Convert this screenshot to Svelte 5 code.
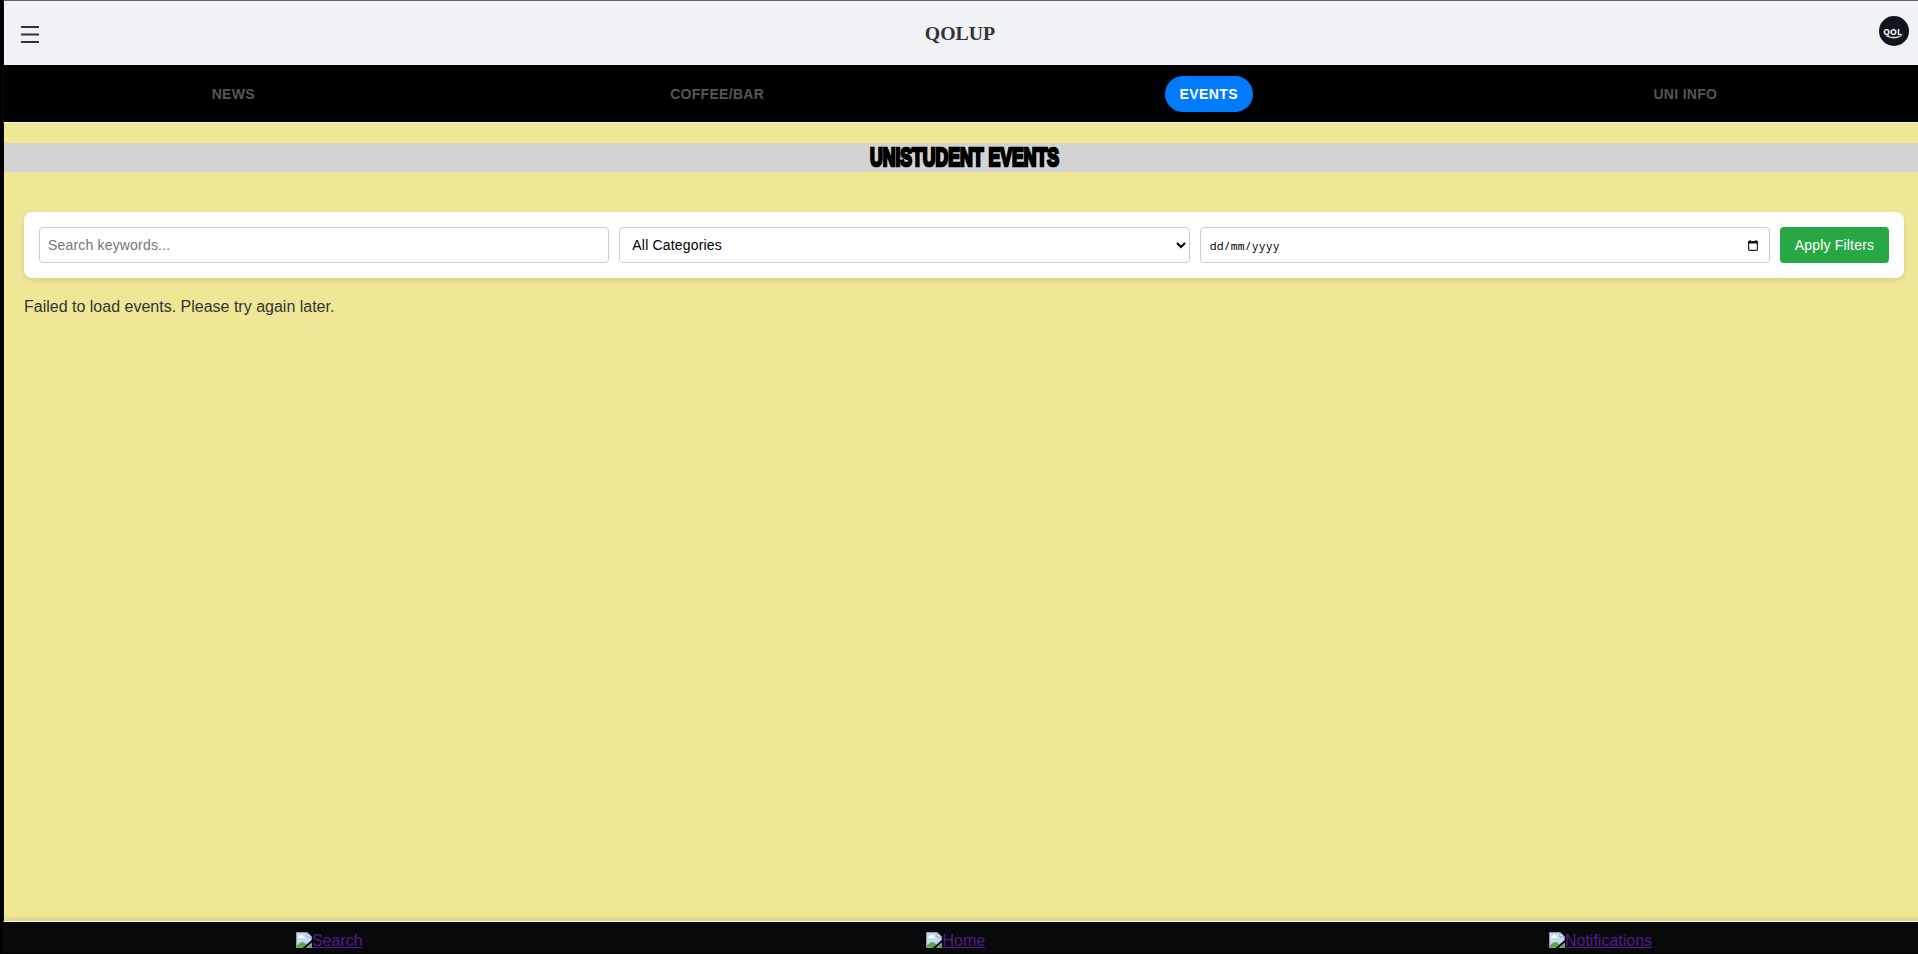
<script>
  const tabs = ['News', 'Coffee/Bar', 'Events', 'Uni Info'];
  const links = ['Search', 'Home', 'Notifications'];
  let active = $state('Events');
</script>

<div class="app">
  <header>
    <button class="menu" aria-label="Menu">
      <svg width="18" height="18" viewBox="0 0 18 18"><path d="M0 1h18M0 8.5h18M0 16h18" stroke="#333" stroke-width="2" /></svg>
    </button>
    <h1>QOLUP</h1>
    <svg class="logo" width="30" height="30" viewBox="0 0 30 30">
      <circle cx="15" cy="15" r="15" fill="#10151d" />
      <text x="4.3" y="19" textLength="18.5" lengthAdjust="spacingAndGlyphs">QOL</text>
      <path d="M7 20Q15.500 24.500 23 19.500Q15.500 22.600 7 20Z" fill="#fff" stroke="#fff" stroke-width=".4" />
      <path d="M23 19l1.600-1.800" stroke="#59606a" stroke-width=".7" />
    </svg>
  </header>
  <nav>
    <div class="tabs">
      {#each tabs as tab}
        <button class="tab" class:active={active === tab} onclick={() => (active = tab)}>{tab}</button>
      {/each}
    </div>
  </nav>
  <main>
    <h2>
      <svg width="194" height="29" viewBox="0 0 194 29">
        <text x="2" y="23.2" textLength="189" lengthAdjust="spacingAndGlyphs">UNISTUDENT EVENTS</text>
      </svg>
    </h2>
    <div class="filters">
      <input placeholder="Search keywords..." />
      <select><option>All Categories</option></select>
      <div class="date">
        <span>dd/mm/yyyy</span>
        <svg width="10" height="11" viewBox="0 0 10 11"><path d="M.6 2h8.8v7.2q0 1.1-1 1.1H1.600q-1 0-1-1Z" fill="none" stroke="#222" stroke-width="1.2" /><path d="M0 1h10v2.400H0ZM1.500 0h1.300v2H1.500ZM7.200 0h1.300v2H7.200Z" fill="#111" /></svg>
      </div>
      <button class="apply">Apply Filters</button>
    </div>
    <p>Failed to load events. Please try again later.</p>
  </main>
  <footer>
    {#each links as link}
      <a href="#top"><svg width="16" height="16" viewBox="0 0 16 16">
        <path d="M.5.5h10.500l4.500 4.500v10.500H.5Z" fill="#c6d9fb" stroke="#999" />
        <path d="M1.500 6Q2 4.500 3.200 4.500Q4 2.500 6 3.200Q7.600 3.500 7.700 5Q9 5 9 6Z" fill="#fff" />
        <path d="M1 15v-1.500Q4.500 8.800 8 10.300L10.500 12.500L7.500 15Z" fill="#54ad39" />
        <path d="M11 .5v4.500h4.500Z" fill="#fff" stroke="#999" />
        <path d="M16 7.800L6.500 16H9.500L16 10.500Z" fill="#07090a" />
        <path d="M10.500 15.500L15.500 11.500v4Z" fill="#54ad39" />
      </svg>{link}</a>
    {/each}
  </footer>
</div>

<style>
  :global(body) { margin: 0; background: #000; }
  .app {
    box-sizing: border-box;
    height: 954px;
    padding-left: 3px;
    display: flex;
    flex-direction: column;
    overflow: hidden;
    font: 16px "Liberation Sans", Arial, sans-serif;
    color: #333;
    background: #000;
  }
  header, nav, main, footer { box-sizing: border-box; border-left: 1px solid #0c0c0c; }
  header {
    height: 65px;
    flex: none;
    display: flex;
    justify-content: space-between;
    align-items: center;
    padding: 0 9px 0 17px;
    background: #f0f2f6;
    border-top: 1px solid #626267;
  }
  button { border: 0; font-family: inherit; }
  .menu { padding: 4px 0 0; background: none; display: flex; width: 20px; }
  .logo { display: block; margin-bottom: 4px; }
  .logo text { font: bold 9px "Open Sans", sans-serif; fill: #fff; }
  h1 { margin: 0; font: bold 19.800px "Liberation Serif", "Times New Roman", serif; }
  nav {
    height: 58px;
    flex: none;
    background: #000;
    border-bottom: 1px solid #f5f3e6;
  }
  .tabs {
    height: 57px;
    margin-right: -7px;
    display: flex;
    justify-content: space-around;
    align-items: center;
  }
  .tab {
    height: 36px;
    padding: 0 14.500px;
    border-radius: 20px;
    background: none;
    color: #555;
    font-size: 14px;
    font-weight: bold;
    letter-spacing: .3px;
    text-transform: uppercase;
  }
  .tab.active { background: #007bff; color: #fff; letter-spacing: .45px; }
  main { flex: 1; background: #efe796; }
  h2 { margin: 20px 0 40px; padding-left: 7px; height: 29px; background: #d3d3d3; display: flex; justify-content: center; }
  h2 svg { overflow: visible; }
  h2 text { font: bold 25.500px "Liberation Sans", Arial, sans-serif; fill: #000; stroke: #000; stroke-width: 2.700px; }
  .filters {
    display: flex;
    gap: 10px;
    margin: 0 14px 20px 20px;
    padding: 15px;
    border-radius: 8px;
    background: #fff;
    box-shadow: 0 2px 4px rgba(0, 0, 0, .1);
  }
  input, select, .date {
    box-sizing: border-box;
    flex: 1 1 0;
    min-width: 0;
    height: 36px;
    padding: 8px;
    border: 1px solid #ccc;
    border-radius: 4px;
    background: #fff;
    font: 14px "Liberation Sans", Arial, sans-serif;
    letter-spacing: .18px;
    color: #000;
  }
  input::placeholder { color: #757575; }
  .date { display: flex; align-items: center; justify-content: space-between; padding: 0 8px; }
  .date svg { margin-right: 3px; }
  .date span { font: 11.400px "Noto Sans Mono", "DejaVu Sans Mono", monospace; padding-left: 1px; }
  .apply { width: 109px; height: 36px; padding: 0; border-radius: 4px; background: #28a745; color: #fff; font-size: 14px; letter-spacing: .18px; }
  p { margin: 0 0 0 20px; line-height: 18px; }
  footer {
    height: 33px;
    flex: none;
    margin-right: -16px;
    padding: 7px 0 0 10px;
    display: flex;
    justify-content: space-around;
    background: #07090a;
    border-top: 1px solid #fffbd0;
    border-bottom: 1px solid #000;
    box-shadow: 0 -2px 5px rgba(0, 0, 0, .1);
  }
  footer a { color: #551a8b; line-height: 24px; height: 24px; }
  footer svg { vertical-align: -2px; }
</style>
